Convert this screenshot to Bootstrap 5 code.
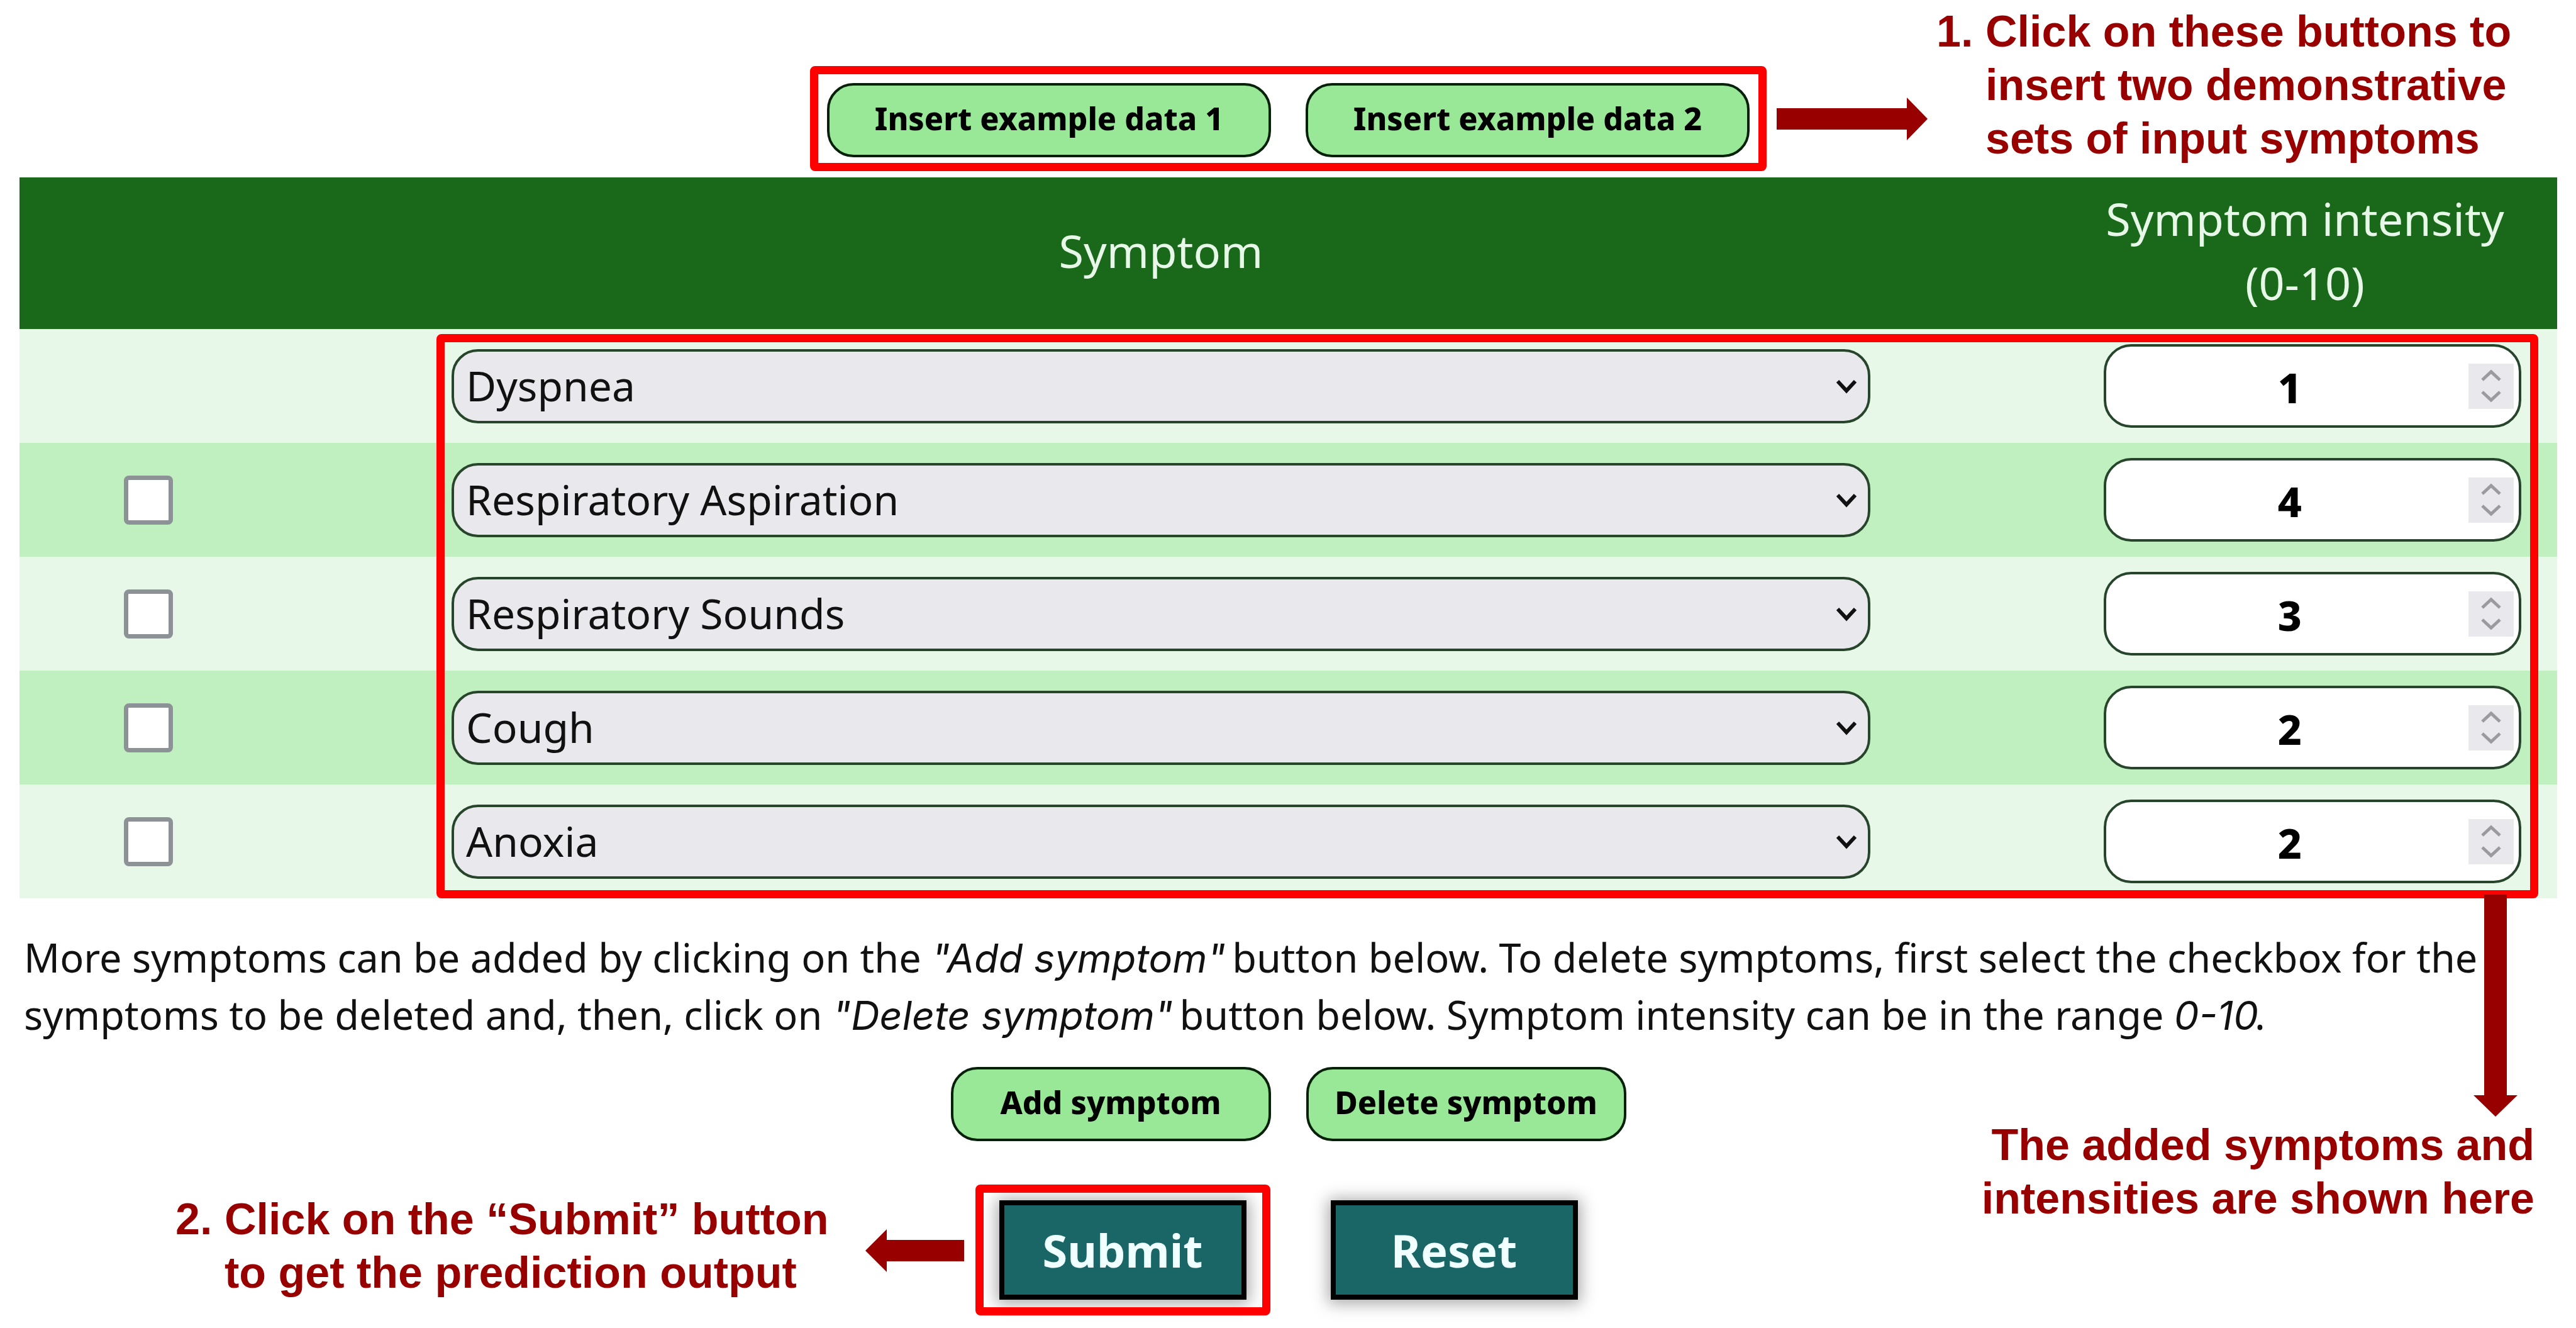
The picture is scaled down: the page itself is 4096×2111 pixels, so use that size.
<!DOCTYPE html>
<html lang="en">
<head>
<meta charset="utf-8">
<meta name="viewport" content="width=device-width, initial-scale=1">
<title>Symptom input</title>
<link href="https://cdn.jsdelivr.net/npm/bootstrap@5.3.0/dist/css/bootstrap.min.css" rel="stylesheet">
<style>
  body { font-family: "Noto Sans", sans-serif; color: #111; background: #fff; }
  .page { padding: 0 30px 44px 31px; }

  /* three-part bands: note | controls | note */
  .band { display: grid; grid-template-columns: 1fr auto 1fr; }

  .note { font: 700 70px/85px "Liberation Sans", Arial, sans-serif; color: #980000; white-space: nowrap; }
  .note .num { width: 78px; }
  .arrow { fill: #980000; display: block; flex: none; }
  .frame { border: 13px solid #f00; border-radius: 8px; }
  .outline { position: absolute; pointer-events: none; }

  .top-band { padding-bottom: 10px; }
  .top-band .frame { margin-top: 105px; padding: 14px 14px 9px; gap: 55px; }
  .top-band .arrow { margin: 155px 14px 0 16px; }
  .top-band .note { margin-top: 8px; }

  .btn-green {
    --bs-btn-bg: #98e898; --bs-btn-color: #000; --bs-btn-border-color: #06200a;
    --bs-btn-hover-bg: #86dc86; --bs-btn-hover-border-color: #06200a;
    --bs-btn-border-width: 4px; --bs-btn-border-radius: 42px; --bs-btn-padding-x: 0; --bs-btn-padding-y: 0;
    height: 118px; font-size: 50px; font-weight: 800; line-height: 100px; padding-bottom: 6px;
  }
  .btn-wide { width: 706px; }
  .btn-narrow { width: 509px; }
  .btn-teal {
    --bs-btn-bg: #1a6666; --bs-btn-color: #f0ffff; --bs-btn-border-color: #000;
    --bs-btn-hover-bg: #145454; --bs-btn-hover-color: #fff; --bs-btn-hover-border-color: #000;
    --bs-btn-border-width: 8px; --bs-btn-border-radius: 0; --bs-btn-padding-x: 0; --bs-btn-padding-y: 0;
    width: 393px; height: 158px; font-size: 72px; font-weight: 700; line-height: 142px;
    box-shadow: 0 2px 24px 4px rgba(0, 0, 0, .35);
  }

  .sheet { --bs-table-bg: transparent; margin: 0; table-layout: fixed; border: 0; }
  .sheet > thead th { background: #1a681a; color: #e8f8e8; font-weight: 400; font-size: 72px; line-height: 102px; padding: 14px 0 23px; border: 0; text-align: center; vertical-align: middle; }
  .sheet > tbody td { height: 181px; padding: 0; border: 0; vertical-align: middle; background: #e7f8e9; }
  .sheet > tbody tr:nth-child(even) td { background: #c0f0c0; }
  .sheet .c-check { width: 9.84%; }
  .sheet .c-value { width: 19.88%; }
  .sheet > tbody td:first-child { text-align: center; padding-left: 12px; }
  .sheet > tbody td:nth-child(2) { padding: 0 290px; }
  .sheet > tbody td:nth-child(3) { padding: 0 57px 0 81px; }

  .pick.form-check-input { width: 78px; height: 78px; margin: 0 auto; border: 7px solid #8c9295; border-radius: 8px; display: block; }
  .pick.form-check-input:not(:checked) { background: #fff; }
  .choice.form-select {
    height: 118px; font-size: 66px; line-height: 94px; color: #111; padding: 4px 90px 8px 19px;
    border: 4px solid #27452b; border-radius: 42px; background-color: #e9e8ed;
    background-image: url("data:image/svg+xml,%3csvg xmlns='http://www.w3.org/2000/svg' viewBox='0 0 36 24'%3e%3cpath fill='none' stroke='%23111' stroke-width='6' d='M4 4l14 15L32 4'/%3e%3c/svg%3e");
    background-size: 36px 24px; background-position: right 16px center;
  }
  .amount.form-control {
    height: 133px; font-size: 66px; line-height: 94px; font-weight: 800; color: #000; text-align: center;
    padding: 6px 78px 4px 6px; border: 4px solid #27452b; border-radius: 44px; background: #fff;
    appearance: textfield; -moz-appearance: textfield;
  }
  .amount::-webkit-inner-spin-button { appearance: none; margin: 0; }
  .stepper { position: absolute; right: 12px; top: 50%; width: 72px; height: 72px; margin-top: -36px; background: #e9e8ed; pointer-events: none; }

  .table-frame { top: 249px; left: 663px; right: 30px; bottom: 0; }
  .table-arrow { position: absolute; top: 1140px; right: 63px; }

  .help { font-size: 63px; line-height: 90px; margin: 49px 0 37px 7px; }
  .help em { font-family: Inter, sans-serif; margin-right: -6px; }

  .controls { gap: 94px; }
  .pair { gap: 56px; }
  .pair-main { gap: 134px; }
  .submit-frame { inset: -25px -38px; }
  .left-side { margin-right: -21px; }
  .left-side .arrow { margin: 0 0 44px 58px; }
  .right-side { padding: 82px 36px 0 0; }
</style>
</head>
<body>
<form class="page" onsubmit="return false">
  <div class="band top-band">
    <div></div>
    <div class="frame d-flex">
      <button type="button" class="btn btn-green btn-wide">Insert example data 1</button>
      <button type="button" class="btn btn-green btn-wide">Insert example data 2</button>
    </div>
    <div class="d-flex align-items-start">
      <svg class="arrow" width="240" height="68" viewBox="0 0 240 68" aria-hidden="true"><path d="M0 17H207V0L240 34L207 68V51H0z"/></svg>
      <div class="note d-flex">
        <div class="num">1.</div>
        <div>Click on these buttons to<br>insert two demonstrative<br>sets of input symptoms</div>
      </div>
    </div>
  </div>

  <div class="position-relative">
    <table class="table sheet">
      <colgroup><col class="c-check"><col><col class="c-value"></colgroup>
      <thead><tr><th></th><th scope="col">Symptom</th><th scope="col">Symptom intensity<br>(0-10)</th></tr></thead>
      <tbody>
        <tr>
          <td></td>
          <td><select class="form-select choice" aria-label="Symptom 1"><option>Dyspnea</option></select></td>
          <td><div class="position-relative"><input type="number" class="form-control amount" min="0" max="10" value="1" aria-label="Intensity 1"><svg class="stepper" viewBox="0 0 72 72" aria-hidden="true"><path d="M22 26L36 13L50 26M22 45L36 58L50 45" fill="none" stroke="#9b9a9e" stroke-width="5"/></svg></div></td>
        </tr>
        <tr>
          <td><input type="checkbox" class="form-check-input pick" aria-label="Select symptom 2"></td>
          <td><select class="form-select choice" aria-label="Symptom 2"><option>Respiratory Aspiration</option></select></td>
          <td><div class="position-relative"><input type="number" class="form-control amount" min="0" max="10" value="4" aria-label="Intensity 2"><svg class="stepper" viewBox="0 0 72 72" aria-hidden="true"><path d="M22 26L36 13L50 26M22 45L36 58L50 45" fill="none" stroke="#9b9a9e" stroke-width="5"/></svg></div></td>
        </tr>
        <tr>
          <td><input type="checkbox" class="form-check-input pick" aria-label="Select symptom 3"></td>
          <td><select class="form-select choice" aria-label="Symptom 3"><option>Respiratory Sounds</option></select></td>
          <td><div class="position-relative"><input type="number" class="form-control amount" min="0" max="10" value="3" aria-label="Intensity 3"><svg class="stepper" viewBox="0 0 72 72" aria-hidden="true"><path d="M22 26L36 13L50 26M22 45L36 58L50 45" fill="none" stroke="#9b9a9e" stroke-width="5"/></svg></div></td>
        </tr>
        <tr>
          <td><input type="checkbox" class="form-check-input pick" aria-label="Select symptom 4"></td>
          <td><select class="form-select choice" aria-label="Symptom 4"><option>Cough</option></select></td>
          <td><div class="position-relative"><input type="number" class="form-control amount" min="0" max="10" value="2" aria-label="Intensity 4"><svg class="stepper" viewBox="0 0 72 72" aria-hidden="true"><path d="M22 26L36 13L50 26M22 45L36 58L50 45" fill="none" stroke="#9b9a9e" stroke-width="5"/></svg></div></td>
        </tr>
        <tr>
          <td><input type="checkbox" class="form-check-input pick" aria-label="Select symptom 5"></td>
          <td><select class="form-select choice" aria-label="Symptom 5"><option>Anoxia</option></select></td>
          <td><div class="position-relative"><input type="number" class="form-control amount" min="0" max="10" value="2" aria-label="Intensity 5"><svg class="stepper" viewBox="0 0 72 72" aria-hidden="true"><path d="M22 26L36 13L50 26M22 45L36 58L50 45" fill="none" stroke="#9b9a9e" stroke-width="5"/></svg></div></td>
        </tr>
      </tbody>
    </table>
    <div class="frame outline table-frame"></div>
    <svg class="arrow table-arrow" width="70" height="353" viewBox="0 0 70 353" aria-hidden="true"><path d="M17 0H53V319H70L35 353L0 319H17z"/></svg>
  </div>

  <p class="help">More symptoms can be added by clicking on the <em>"Add symptom"</em> button below. To delete symptoms, first select the checkbox for the<br>symptoms to be deleted and, then, click on <em>"Delete symptom"</em> button below. Symptom intensity can be in the range <em>0-10</em>.</p>

  <div class="band">
    <div class="left-side d-flex justify-content-end align-items-end">
      <div class="note d-flex">
        <div class="num">2.</div>
        <div>Click on the “Submit” button<br>to get the prediction output</div>
      </div>
      <svg class="arrow" width="157" height="68" viewBox="0 0 157 68" aria-hidden="true"><path d="M157 17H34V0L0 34L34 68V51H157z"/></svg>
    </div>
    <div class="controls d-flex flex-column align-items-center">
      <div class="pair d-flex">
        <button type="button" class="btn btn-green btn-narrow">Add symptom</button>
        <button type="button" class="btn btn-green btn-narrow">Delete symptom</button>
      </div>
      <div class="pair-main d-flex">
        <div class="position-relative">
          <button type="submit" class="btn btn-teal">Submit</button>
          <div class="frame outline submit-frame"></div>
        </div>
        <button type="reset" class="btn btn-teal">Reset</button>
      </div>
    </div>
    <div class="right-side note text-end">The added symptoms and<br>intensities are shown here</div>
  </div>
</form>
<script src="https://cdn.jsdelivr.net/npm/bootstrap@5.3.0/dist/js/bootstrap.bundle.min.js"></script>
</body>
</html>
